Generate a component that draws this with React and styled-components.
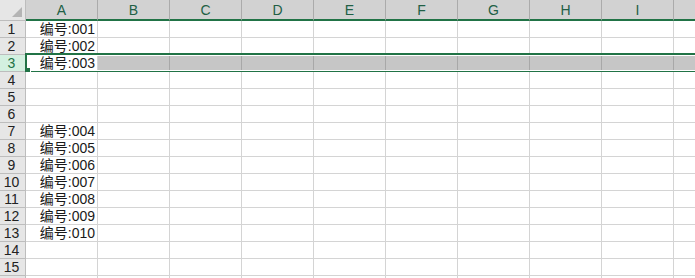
import React from "react";
import styled, { createGlobalStyle } from "styled-components";

const GlobalStyle = createGlobalStyle`
  html, body {
    margin: 0;
    padding: 0;
    background: #ffffff;
    overflow: hidden;
  }
  body {
    font-family: "Liberation Sans", "Noto Sans CJK SC", sans-serif;
  }
`;

const COLS = ["A", "B", "C", "D", "E", "F", "G", "H", "I", "J"];

const values = {
  1: "编号:001",
  2: "编号:002",
  3: "编号:003",
  7: "编号:004",
  8: "编号:005",
  9: "编号:006",
  10: "编号:007",
  11: "编号:008",
  12: "编号:009",
  13: "编号:010",
};

const Sheet = styled.div`
  width: 695px;
  height: 278px;
  overflow: hidden;
  display: flex;
  flex-direction: column;
`;

const Row = styled.div`
  position: relative;
  display: grid;
  grid-template-columns: 26px repeat(10, 72px);
  height: 17px;
  flex: none;
`;

const HeaderRow = styled(Row)`
  height: 21px;
`;

const Corner = styled.div`
  position: relative;
  background: #e6e6e6;
  border-right: 1px solid #bdbdbd;
  border-bottom: 1px solid #bdbdbd;
  box-sizing: border-box;
  &::after {
    content: "";
    position: absolute;
    right: 3px;
    bottom: 3px;
    width: 0;
    height: 0;
    border-left: 10px solid transparent;
    border-bottom: 10px solid #b4b4b4;
  }
`;

const ColHead = styled.div`
  box-sizing: border-box;
  background: #d2d2d2;
  border-right: 1px solid #ababab;
  border-bottom: 2px solid #217346;
  display: flex;
  align-items: center;
  justify-content: center;
  font-size: 14px;
  color: #215f45;
  padding-top: 1px;
  overflow: hidden;
`;

const RowHead = styled.div`
  box-sizing: border-box;
  background: ${(p) => (p.$active ? "#d3f0e0" : "#e6e6e6")};
  color: ${(p) => (p.$active ? "#217346" : "#222222")};
  border-right: 1px solid #bdbdbd;
  border-bottom: 1px solid #bdbdbd;
  display: flex;
  align-items: flex-end;
  justify-content: center;
  font-size: 14px;
  line-height: 16px;
  padding-right: 2px;
`;

const Cell = styled.div`
  box-sizing: border-box;
  background: ${(p) => (p.$selected ? "#c6c6c6" : "#ffffff")};
  border-right: 1px solid ${(p) => (p.$selected ? "#a8a8a8" : "#d4d4d4")};
  border-bottom: 1px solid #d4d4d4;
  display: flex;
  align-items: flex-end;
  justify-content: flex-end;
  font-size: 14px;
  line-height: 16px;
  color: #1a1a1a;
  padding-right: 2px;
  white-space: nowrap;
`;

const Selection = styled.div`
  position: absolute;
  left: 25px;
  right: -4px;
  top: -2px;
  height: 20px;
  box-sizing: border-box;
  border: 2px solid #217346;
  box-shadow: inset 0 0 0 1px #ffffff;
  pointer-events: none;
  &::after {
    content: "";
    position: absolute;
    left: -2px;
    bottom: -3px;
    width: 5px;
    height: 5px;
    background: #217346;
    border: 1px solid #ffffff;
    border-left: none;
    border-top: none;
  }
`;

export default function App() {
  const rows = Array.from({ length: 16 }, (_, i) => i + 1);
  return (
    <>
      <GlobalStyle />
      <Sheet>
        <HeaderRow>
          <Corner />
          {COLS.map((c) => (
            <ColHead key={c}>{c === "J" ? "" : c}</ColHead>
          ))}
        </HeaderRow>
        {rows.map((r) => {
          const active = r === 3;
          return (
            <Row key={r}>
              <RowHead $active={active}>{r < 16 ? r : ""}</RowHead>
              {COLS.map((c, ci) => (
                <Cell key={c} $selected={active && ci > 0}>
                  {ci === 0 ? values[r] || "" : ""}
                </Cell>
              ))}
              {active && <Selection />}
            </Row>
          );
        })}
      </Sheet>
    </>
  );
}
